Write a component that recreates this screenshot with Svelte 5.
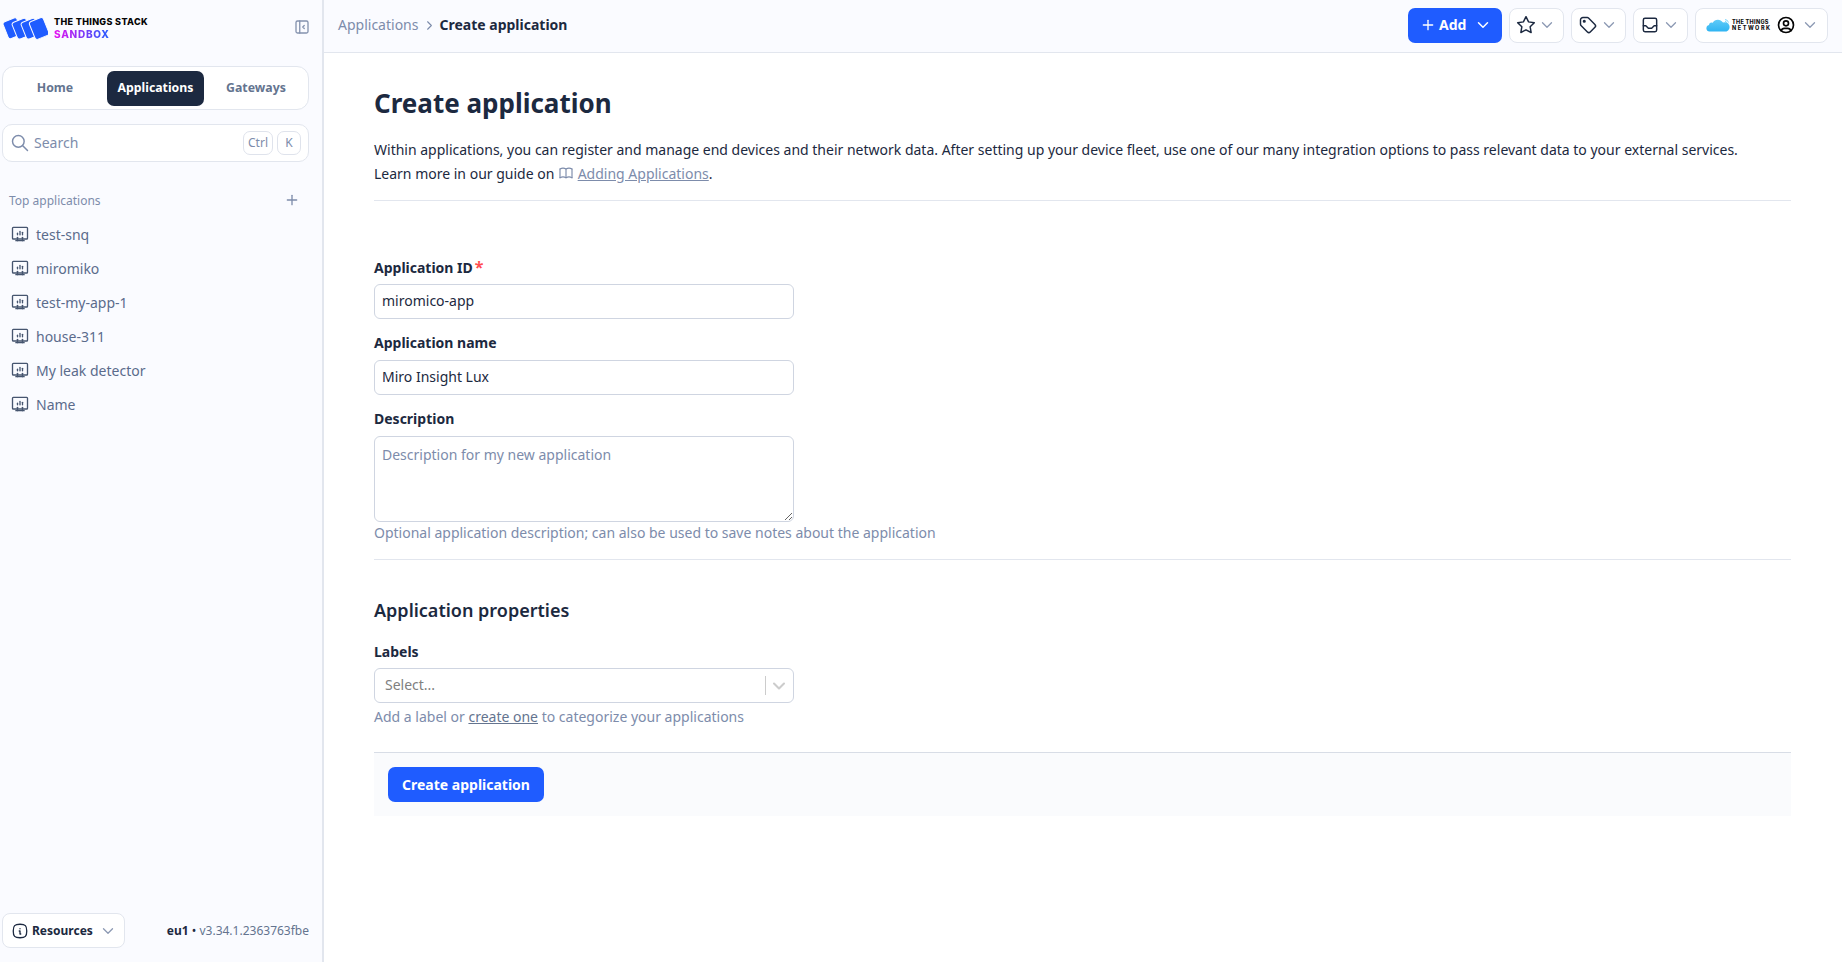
<script>
  const icons = {
    desktop: ['M3 5a1 1 0 0 1 1 -1h16a1 1 0 0 1 1 1v12a1 1 0 0 1 -1 1h-16a1 1 0 0 1 -1 -1z', 'M7 20h10', 'M9 16v4', 'M15 16v4', 'M9 13v-2', 'M12 13v-4', 'M15 13v-3'],
    star: ['M12 17.75l-6.172 3.245l1.179 -6.873l-5 -4.867l6.9 -1l3.086 -6.253l3.086 6.253l6.9 1l-5 4.867l1.179 6.873z'],
    tag: ['M6.5 7.5a1 1 0 1 0 2 0a1 1 0 1 0 -2 0', 'M3 6v5.172a2 2 0 0 0 .586 1.414l7.71 7.71a2.41 2.41 0 0 0 3.408 0l5.592 -5.592a2.41 2.41 0 0 0 0 -3.408l-7.71 -7.71a2 2 0 0 0 -1.414 -.586h-5.172a3 3 0 0 0 -3 3z'],
    inbox: ['M4 6a2 2 0 0 1 2 -2h12a2 2 0 0 1 2 2v12a2 2 0 0 1 -2 2h-12a2 2 0 0 1 -2 -2z', 'M4 13h3l3 3h4l3 -3h3'],
    user: ['M3 12a9 9 0 1 0 18 0a9 9 0 1 0 -18 0', 'M9 10a3 3 0 1 0 6 0a3 3 0 1 0 -6 0', 'M6.168 18.849a4 4 0 0 1 3.832 -2.849h4a4 4 0 0 1 3.834 2.855'],
    info: ['M12 9h.01', 'M11 12h1v4h1', 'M12 3c7.2 0 9 1.8 9 9s-1.8 9 -9 9s-9 -1.8 -9 -9s1.8 -9 9 -9z'],
    panel: ['M4 6a2 2 0 0 1 2 -2h12a2 2 0 0 1 2 2v12a2 2 0 0 1 -2 2h-12a2 2 0 0 1 -2 -2z', 'M9 4v16', 'M15 10l-2 2l2 2'],
    search: ['M3 10a7 7 0 1 0 14 0a7 7 0 1 0 -14 0', 'M21 21l-6 -6'],
    book: ['M3 19a9 9 0 0 1 9 0a9 9 0 0 1 9 0', 'M3 6a9 9 0 0 1 9 0a9 9 0 0 1 9 0', 'M3 6l0 13', 'M12 6l0 13', 'M21 6l0 13'],
    chevron: ['M6 9l6 6l6 -6'],
    plus: ['M12 5l0 14', 'M5 12l14 0']
  };

  const apps = ['test-snq', 'miromiko', 'test-my-app-1', 'house-311', 'My leak detector', 'Name'];
  const tabs = ['Home', 'Applications', 'Gateways'];
</script>

{#snippet icon(name, cls)}
  <svg class={`icon ${cls}`} viewBox="0 0 24 24" fill="none" stroke="currentColor" stroke-linecap="round" stroke-linejoin="round">
    {#each icons[name] as d}<path {d} />{/each}
  </svg>
{/snippet}

<div class="page">
  <aside class="sidebar">
    <div class="brand">
      <div class="logo">
        <svg class="cards" viewBox="0 0 46 24" width="46" height="24">
          <g fill="#1f5cff" stroke="#fafbff" stroke-width="1">
            <rect x="3" y="3.5" width="15" height="18" rx="2.5" transform="rotate(-22 10 12)" />
            <rect x="12" y="3.5" width="15" height="18" rx="2.5" transform="rotate(-22 20 12)" />
            <rect x="21" y="3.5" width="15" height="18" rx="2.5" transform="rotate(-22 29 12)" />
            <rect x="29.5" y="3" width="15" height="19" rx="2.5" transform="rotate(-22 37 12)" />
          </g>
        </svg>
        <div class="logo-text">
          <span class="logo-name">THE THINGS STACK</span>
          <span class="logo-sub">SANDBOX</span>
        </div>
      </div>
      {@render icon('panel', 'panel')}
    </div>

    <nav class="tabs">
      {#each tabs as tab}
        <span class="tab" class:active={tab === 'Applications'}>{tab}</span>
      {/each}
    </nav>

    <div class="search">
      {@render icon('search', 'search-icon')}
      <span class="search-text">Search</span>
      <kbd>Ctrl</kbd>
      <kbd>K</kbd>
    </div>

    <div class="top-head">
      <span>Top applications</span>
      {@render icon('plus', 'top-plus')}
    </div>

    <ul class="apps">
      {#each apps as app}
        <li>{@render icon('desktop', 'app-icon')}<span>{app}</span></li>
      {/each}
    </ul>

    <div class="side-foot">
      <button class="resources" type="button">
        {@render icon('info', 'info-icon')}
        <span>Resources</span>
        {@render icon('chevron', 'chev')}
      </button>
      <span class="version"><b>eu1</b> • <span>v3.34.1.2363763fbe</span></span>
    </div>
  </aside>

  <div class="content">
    <header class="topbar">
      <div class="crumbs">
        <span class="crumb">Applications</span>
        {@render icon('chevron', 'crumb-sep')}
        <b>Create application</b>
      </div>
      <div class="actions">
        <button class="add" type="button">
          {@render icon('plus', 'add-plus')}
          <span>Add</span>
          {@render icon('chevron', 'add-chev')}
        </button>
        <button class="tool" type="button">{@render icon('star', 'tool-icon')}{@render icon('chevron', 'chev')}</button>
        <button class="tool" type="button">{@render icon('tag', 'tool-icon')}{@render icon('chevron', 'chev')}</button>
        <button class="tool" type="button">{@render icon('inbox', 'tool-icon')}{@render icon('chevron', 'chev')}</button>
        <button class="tool account" type="button">
          <svg class="cloud" viewBox="0 0 24 14" width="24" height="14">
            <defs>
              <linearGradient id="cloudfill" x1="0" y1="0" x2="0" y2="1">
                <stop offset="0" stop-color="#5fcbf8" />
                <stop offset="1" stop-color="#2fb4f2" />
              </linearGradient>
            </defs>
            <path fill="url(#cloudfill)" d="M3.5 13.5a3.3 3.3 0 0 1-.6-6.5 3 3 0 0 1 3.8-2.2A6 6 0 0 1 17 4.5a4.6 4.6 0 0 1 3.5 9z" />
            <path fill="none" stroke="#5fcbf8" stroke-width=".8" d="M19 1.5a4 4 0 0 1 3.5 3M19 3.2a2.2 2.2 0 0 1 1.8 1.6" />
          </svg>
          <span class="ttn"><span class="ttn-top">THE THINGS</span><span class="ttn-wide">NETWORK</span></span>
          {@render icon('user', 'user-icon')}
          {@render icon('chevron', 'chev user-chev')}
        </button>
      </div>
    </header>

    <main class="main">
      <h1>Create application</h1>
      <p class="intro">
        Within applications, you can register and manage end devices and their network data. After setting up your device fleet, use one of our many integration options to pass relevant data to your external services.<br />
        Learn more in our guide on {@render icon('book', 'book')} <a href="#guide">Adding Applications</a>.
      </p>

      <form class="form">
        <label class="field first">
          <span class="label">Application ID<em>*</em></span>
          <input type="text" value="miromico-app" />
        </label>
        <label class="field">
          <span class="label">Application name</span>
          <input type="text" value="Miro Insight Lux" />
        </label>
        <label class="field">
          <span class="label">Description</span>
          <textarea placeholder="Description for my new application"></textarea>
          <span class="help">Optional application description; can also be used to save notes about the application</span>
        </label>

        <h2>Application properties</h2>

        <div class="field labels">
          <span class="label">Labels</span>
          <div class="select">
            <span class="select-text">Select...</span>
            <i></i>
            {@render icon('chevron', 'select-chev')}
          </div>
          <span class="help select-help">Add a label or <a href="#labels">create one</a> to categorize your applications</span>
        </div>

        <div class="submit-bar">
          <button class="submit" type="button">Create application</button>
        </div>
      </form>
    </main>
  </div>
</div>

<style>
  :global(body) {
    margin: 0;
    background: #fff;
    font-family: "Noto Sans", sans-serif;
    color: #1c2940;
  }
  .page {
    display: flex;
    height: 962px;
    overflow: hidden;
  }
  .icon {
    display: block;
    flex: none;
    stroke-width: 2;
  }

  .sidebar {
    box-sizing: border-box;
    width: 324px;
    flex: none;
    display: flex;
    flex-direction: column;
    padding: 0 14px 14px 2px;
    background: #fafbff;
    border-right: 2px solid #e2e6ee;
  }
  .brand {
    height: 52px;
    display: flex;
    align-items: center;
    justify-content: space-between;
  }
  .logo {
    display: flex;
    align-items: center;
    gap: 6px;
    margin-top: 4px;
  }
  .logo-text {
    display: flex;
    flex-direction: column;
    font-family: Inter, sans-serif;
    font-weight: 800;
    line-height: 12px;
  }
  .logo-name {
    color: #050505;
    font-size: 9px;
    letter-spacing: 0.35px;
  }
  .logo-sub {
    width: fit-content;
    font-size: 10px;
    letter-spacing: 0.75px;
    background: linear-gradient(90deg, #e80ff0, #1f5cff);
    background-clip: text;
    -webkit-background-clip: text;
    color: transparent;
  }
  .panel {
    width: 18px;
    height: 18px;
    color: #8492ae;
    margin-right: -3px;
    margin-top: 2px;
    stroke-width: 1.75;
  }

  .tabs {
    box-sizing: border-box;
    width: 307px;
    height: 44px;
    margin-top: 14px;
    display: grid;
    grid-template-columns: 1fr 97px 1fr;
    align-items: center;
    background: #fff;
    border: 1px solid #e2e6ee;
    border-radius: 12px;
  }
  .tab {
    height: 35px;
    padding-bottom: 2px;
    box-sizing: border-box;
    display: flex;
    align-items: center;
    justify-content: center;
    font-size: 12.3px;
    font-weight: 700;
    color: #64748f;
  }
  .tab.active {
    background: #1c2940;
    color: #fff;
    border-radius: 7px;
  }

  .search {
    box-sizing: border-box;
    width: 307px;
    height: 38px;
    margin-top: 14px;
    display: flex;
    align-items: center;
    padding: 0 7px 0 7px;
    background: #fff;
    border: 1px solid #e2e6ee;
    border-radius: 10px;
    color: #7d8cab;
  }
  .search-icon {
    width: 20px;
    height: 20px;
    stroke-width: 1.75;
  }
  .search-text {
    margin-left: 4px;
    padding-bottom: 2px;
    flex: 1;
    font-size: 14px;
  }
  kbd {
    box-sizing: border-box;
    height: 24px;
    min-width: 24px;
    margin-left: 4px;
    padding: 0 4px 1px;
    display: flex;
    align-items: center;
    justify-content: center;
    font-family: inherit;
    font-size: 12px;
    background: #fff;
    border: 1px solid #dfe3ec;
    border-radius: 7px;
  }

  .top-head {
    width: 307px;
    box-sizing: border-box;
    margin-top: 28px;
    height: 20px;
    display: flex;
    align-items: center;
    justify-content: space-between;
    padding: 0 9px 0 7px;
    font-size: 12px;
    color: #7d8cab;
  }
  .top-plus {
    width: 16px;
    height: 16px;
  }

  .apps {
    list-style: none;
    margin: 7px 0 0;
    padding: 0;
  }
  .apps li {
    height: 34px;
    display: flex;
    align-items: center;
    gap: 6px;
    padding-left: 8px;
    font-size: 14px;
    color: #5b6b8c;
  }
  .app-icon {
    width: 20px;
    height: 20px;
    color: #46556f;
    stroke-width: 1.6;
  }

  .side-foot {
    margin-top: auto;
    width: 307px;
    display: flex;
    align-items: center;
    justify-content: space-between;
  }
  .resources {
    box-sizing: border-box;
    width: 123px;
    height: 35px;
    display: flex;
    align-items: center;
    padding: 0 7px 0 8px;
    background: #fff;
    border: 1px solid #e2e6ee;
    border-radius: 8px;
    font-family: inherit;
    font-size: 12px;
    font-weight: 700;
    color: #1c2940;
  }
  .resources span {
    margin: 0 auto 0 3px;
    padding-bottom: 1px;
  }
  .info-icon {
    width: 18px;
    height: 18px;
    stroke-width: 1.75;
  }
  .chev {
    width: 18px;
    height: 18px;
    color: #8c99b3;
    stroke-width: 1.75;
  }
  .version {
    font-size: 12px;
    color: #1c2940;
  }
  .version b {
    font-weight: 700;
  }
  .version span {
    color: #64748f;
  }

  .content {
    flex: 1;
    min-width: 0;
    display: flex;
    flex-direction: column;
  }
  .topbar {
    box-sizing: border-box;
    height: 53px;
    flex: none;
    display: flex;
    align-items: center;
    justify-content: space-between;
    padding: 0 14px 1px 14px;
    background: #fafbff;
    border-bottom: 1px solid #e2e6ee;
  }
  .crumbs {
    display: flex;
    align-items: center;
    gap: 4px;
    font-size: 14px;
    padding-bottom: 2px;
  }
  .crumb {
    color: #7d8cab;
  }
  .crumb-sep {
    width: 15px;
    height: 15px;
    transform: rotate(-90deg);
    color: #7d8cab;
    stroke-width: 1.75;
    margin: 2px -2px 0 0;
  }
  .crumbs b {
    font-weight: 700;
  }
  .actions {
    display: flex;
    align-items: center;
    gap: 7px;
  }
  button {
    cursor: pointer;
  }
  .add {
    box-sizing: border-box;
    width: 94px;
    height: 35px;
    display: flex;
    align-items: center;
    padding: 0 10px 1px 12px;
    background: #1f5cff;
    border: 0;
    border-radius: 7px;
    color: #fff;
    font-family: inherit;
    font-size: 14px;
    font-weight: 700;
  }
  .add span {
    margin: 0 auto 0 3px;
    padding-bottom: 1px;
  }
  .add-plus {
    width: 16px;
    height: 16px;
  }
  .add-chev {
    width: 18px;
    height: 18px;
  }
  .tool {
    box-sizing: border-box;
    width: 55px;
    height: 35px;
    display: flex;
    align-items: center;
    justify-content: space-between;
    padding: 0 7px 2px 6px;
    background: #fff;
    border: 1px solid #e2e6ee;
    border-radius: 8px;
    color: #1c2940;
  }
  .tool-icon {
    width: 20px;
    height: 20px;
    stroke-width: 1.75;
  }
  .account {
    width: 133px;
    padding: 0 8px 2px 10px;
    justify-content: flex-start;
  }
  .cloud {
    flex: none;
  }
  .ttn {
    margin-left: 2px;
    display: flex;
    flex-direction: column;
    font-family: Inter, sans-serif;
    font-size: 5.5px;
    font-weight: 800;
    line-height: 6px;
    color: #111;
    text-align: left;
    white-space: nowrap;
  }
  .ttn-top {
    letter-spacing: 0.3px;
  }
  .ttn-wide {
    letter-spacing: 1.55px;
  }
  .user-icon {
    width: 20px;
    height: 20px;
    margin-left: 4px;
    color: #050505;
  }
  .account :global(.user-chev) {
    margin-left: auto;
  }

  .main {
    flex: 1;
    padding: 0 51px 0 50px;
  }
  h1 {
    margin: 32px 0 0;
    font-size: 26px;
    line-height: 36px;
    font-weight: 700;
  }
  .intro {
    margin: 17px 0 0;
    padding-bottom: 14px;
    border-bottom: 1px solid #e2e6ee;
    font-size: 14px;
    line-height: 24px;
  }
  .book {
    display: inline-block;
    vertical-align: -2px;
    width: 16px;
    height: 16px;
    margin: 0;
    color: #7d8cab;
    stroke-width: 1.75;
  }
  .intro a,
  .help a {
    color: #7d8cab;
    text-decoration: underline;
  }
  .help a {
    color: #64748f;
  }

  .field {
    display: block;
    margin-top: 14px;
  }
  .field.first {
    margin-top: 56px;
  }
  .field.labels {
    margin-top: 19px;
  }
  .field.labels .label {
    height: 26px;
  }
  .label {
    display: block;
    height: 27px;
    font-size: 14px;
    line-height: 20px;
    font-weight: 700;
  }
  .label em {
    color: #ff4d4f;
    font-style: normal;
    font-size: 16px;
    margin-left: 2px;
  }
  input,
  textarea {
    box-sizing: border-box;
    display: block;
    width: 420px;
    background: #fff;
    border: 1px solid #cfd5e1;
    border-radius: 6px;
    outline: 0;
    font-family: inherit;
    font-size: 14px;
    color: #1c2940;
  }
  input {
    height: 35px;
    padding: 0 7px 2px;
  }
  textarea {
    height: 86px;
    padding: 8px 7px;
    line-height: 20px;
  }
  textarea::placeholder {
    color: #7d8cab;
  }
  .help {
    display: block;
    margin-top: 1px;
    font-size: 14px;
    line-height: 20px;
    color: #7d8cab;
  }
  .select-help {
    margin-top: 4px;
  }
  h2 {
    margin: 16px 0 0;
    padding-top: 37px;
    border-top: 1px solid #e2e6ee;
    font-size: 18px;
    line-height: 26px;
    font-weight: 600;
  }
  .select {
    box-sizing: border-box;
    width: 420px;
    height: 35px;
    display: flex;
    align-items: center;
    padding: 0 4px 0 10px;
    background: #fff;
    border: 1px solid #cfd5e1;
    border-radius: 6px;
  }
  .select-text {
    flex: 1;
    padding-bottom: 2px;
    font-size: 14px;
    color: #808080;
  }
  .select i {
    width: 1px;
    height: 19px;
    background: #ccc;
    margin-right: 3px;
  }
  .select-chev {
    width: 20px;
    height: 20px;
    color: #ccc;
    stroke-width: 2.5;
  }
  .submit-bar {
    margin-top: 25px;
    padding: 14px;
    background: #fafbfd;
    border-top: 1px solid #d8dde6;
  }
  .submit {
    display: block;
    height: 35px;
    width: 156px;
    padding: 0 0 1px;
    background: #1f5cff;
    border: 0;
    border-radius: 7px;
    color: #fff;
    font-family: inherit;
    font-size: 14px;
    font-weight: 700;
  }
</style>
